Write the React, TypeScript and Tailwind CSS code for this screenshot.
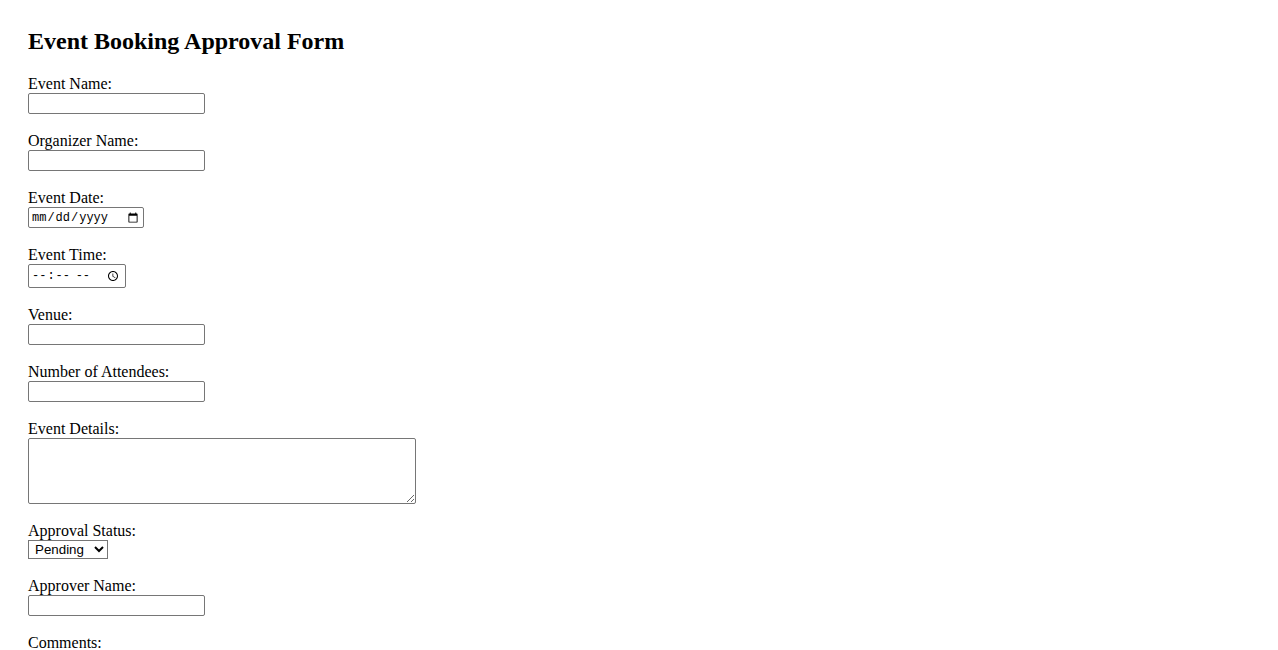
import React from "react";

const serif = { fontFamily: '"Liberation Serif", "Times New Roman", serif' };

function Label({ children }: { children: React.ReactNode }) {
  return (
    <label className="block h-[19px] pt-[1px] text-[16px] leading-[18px] text-black whitespace-nowrap">
      {children}
    </label>
  );
}

const textInput =
  "block w-[177px] h-[21px] border border-[#767676] rounded-[2px] bg-white px-[2px] py-[1px] text-[13px] [font-family:'Liberation_Sans',Arial,sans-serif]";

export default function App() {
  return (
    <div className="min-h-screen bg-white px-[28px] pt-[28px] pb-[28px] text-black" style={serif}>
      <h2 className="text-[24px] leading-[27px] font-bold mb-[19px]">Event Booking Approval Form</h2>
      <form>
        <div className="mb-[17px]">
          <Label>Event Name:</Label>
          <input type="text" className={textInput} />
        </div>
        <div className="mb-[17px]">
          <Label>Organizer Name:</Label>
          <input type="text" className={textInput} />
        </div>
        <div className="mb-[17px]">
          <Label>Event Date:</Label>
          <input
            type="date"
            className="block w-[116px] h-[21px] border border-[#767676] rounded-[2px] bg-white pl-[2px] pr-[2px] py-0 text-[12px] [font-family:'Liberation_Mono',monospace]"
          />
        </div>
        <div className="mb-[17px]">
          <Label>Event Time:</Label>
          <input
            type="time"
            className="block w-[98px] h-[24px] border border-[#767676] rounded-[2px] bg-white pl-[2px] pr-[2px] py-0 text-[12px] [font-family:'Liberation_Mono',monospace]"
          />
        </div>
        <div className="mb-[17px]">
          <Label>Venue:</Label>
          <input type="text" className={textInput} />
        </div>
        <div className="mb-[17px]">
          <Label>Number of Attendees:</Label>
          <input type="number" className={textInput} />
        </div>
        <div className="mb-[17px]">
          <Label>Event Details:</Label>
          <textarea className="block w-[388px] h-[66px] border border-[#767676] rounded-[2px] bg-white px-[2px] py-[2px] text-[13px] [font-family:'Liberation_Mono',monospace]" />
        </div>
        <div className="mb-[17px]">
          <Label>Approval Status:</Label>
          <select className="block w-[80px] h-[19px] border border-[#767676] rounded-none bg-white pl-[2px] text-[13.33px] leading-[15px] [font-family:'Liberation_Sans',Arial,sans-serif]">
            <option>Pending</option>
            <option>Approved</option>
            <option>Rejected</option>
          </select>
        </div>
        <div className="mb-[17px]">
          <Label>Approver Name:</Label>
          <input type="text" className={textInput} />
        </div>
        <div className="mb-[17px]">
          <Label>Comments:</Label>
          <textarea className="block w-[388px] h-[66px] border border-[#767676] rounded-[2px] bg-white px-[2px] py-[2px] text-[13px] [font-family:'Liberation_Mono',monospace]" />
        </div>
        <button
          type="submit"
          className="border border-[#767676] rounded-[2px] bg-[#efefef] px-[6px] py-[1px] text-[13px] [font-family:'Liberation_Sans',Arial,sans-serif]"
        >
          Submit
        </button>
      </form>
    </div>
  );
}
